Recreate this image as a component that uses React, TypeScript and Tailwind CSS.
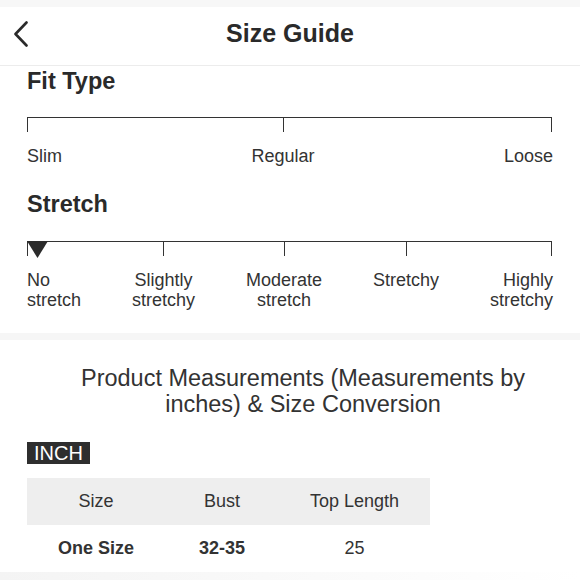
import React from "react";

const font = { fontFamily: '"Liberation Sans", Arial, sans-serif' };

function ScaleLine({ widths, marker }: { widths: number[]; marker?: boolean }) {
  return (
    <div className="relative flex">
      {widths.map((w, i) => (
        <div
          key={i}
          style={{ width: w }}
          className={`h-[15px] border-t-[1.5px] border-l-[1.5px] border-[#333] ${
            i === widths.length - 1 ? "border-r-[1.5px]" : ""
          }`}
        />
      ))}
      {marker && (
        <svg
          className="absolute left-0 top-0"
          width="21"
          height="17"
          viewBox="0 0 21 17"
        >
          <polygon points="0,0 21,0 10.5,17" fill="#2b2b2b" />
        </svg>
      )}
    </div>
  );
}

export default function App() {
  const stretchLabels = [
    { l1: "No", l2: "stretch", align: "text-left" },
    { l1: "Slightly", l2: "stretchy", align: "text-center" },
    { l1: "Moderate", l2: "stretch", align: "text-center" },
    { l1: "Stretchy", l2: "", align: "text-center" },
    { l1: "Highly", l2: "stretchy", align: "text-right" },
  ];

  return (
    <div className="h-[580px] w-[580px] overflow-hidden bg-white text-[#2a2a2a]" style={font}>
      <div className="h-[7px] bg-[#f7f7f7]" />
      <header className="relative flex h-[59px] justify-center border-b border-[#ececec] pt-[11px]">
        <svg
          className="absolute left-[13px] top-[14px]"
          width="16"
          height="26"
          viewBox="0 0 16 26"
          fill="none"
          stroke="#2a2a2a"
          strokeWidth="2.6"
          strokeLinecap="round"
          strokeLinejoin="round"
        >
          <path d="M13.5 1.5 L2.5 13 L13.5 24.5" />
        </svg>
        <h1 className="text-[25px] font-bold leading-[30px]">Size Guide</h1>
      </header>

      <section className="px-[27px] pb-[23px]">
        <h2 className="mt-[1px] text-[23.5px] font-bold leading-[28px]">Fit Type</h2>
        <div className="mt-[22px]">
          <ScaleLine widths={[256, 269]} />
        </div>
        <div className="mt-[14px] flex justify-between text-[18px] leading-[21px] text-[#333]">
          <span>Slim</span>
          <span>Regular</span>
          <span>Loose</span>
        </div>

        <h2 className="mt-[23px] text-[23.5px] font-bold leading-[28px]">Stretch</h2>
        <div className="mt-[23px]">
          <ScaleLine widths={[136, 121, 122, 146]} marker />
        </div>
        <div className="mt-[14px] flex justify-between text-[18px] leading-[20px] text-[#333]">
          {stretchLabels.map((s) => (
            <div key={s.l1} className={s.align}>
              <div>{s.l1}</div>
              {s.l2 && <div>{s.l2}</div>}
            </div>
          ))}
        </div>
      </section>

      <div className="h-[7px] bg-[#f6f6f6]" />

      <section className="px-[27px] pt-[25px]">
        <p className="pl-[53px] pr-[27px] text-center text-[23.5px] leading-[26px] text-[#333]">
          Product Measurements (Measurements by inches) &amp; Size Conversion
        </p>
        <div className="mt-[25px] flex">
          <span className="bg-[#2e2e2e] px-[7px] text-[20px] leading-[22px] text-white">INCH</span>
        </div>
        <table className="mt-[14px] w-[403px] border-collapse text-[18px] text-[#333]">
          <thead>
            <tr className="h-[47px] bg-[#eeeeee]">
              <th className="w-[138px] text-center font-normal">Size</th>
              <th className="w-[114px] text-center font-normal">Bust</th>
              <th className="text-center font-normal">Top Length</th>
            </tr>
          </thead>
          <tbody>
            <tr className="h-[47px]">
              <td className="text-center font-bold">One Size</td>
              <td className="text-center font-bold">32-35</td>
              <td className="text-center">25</td>
            </tr>
          </tbody>
        </table>
      </section>
      <div className="h-[10px] bg-gradient-to-r from-[#f4f4f4] to-white" />
    </div>
  );
}
